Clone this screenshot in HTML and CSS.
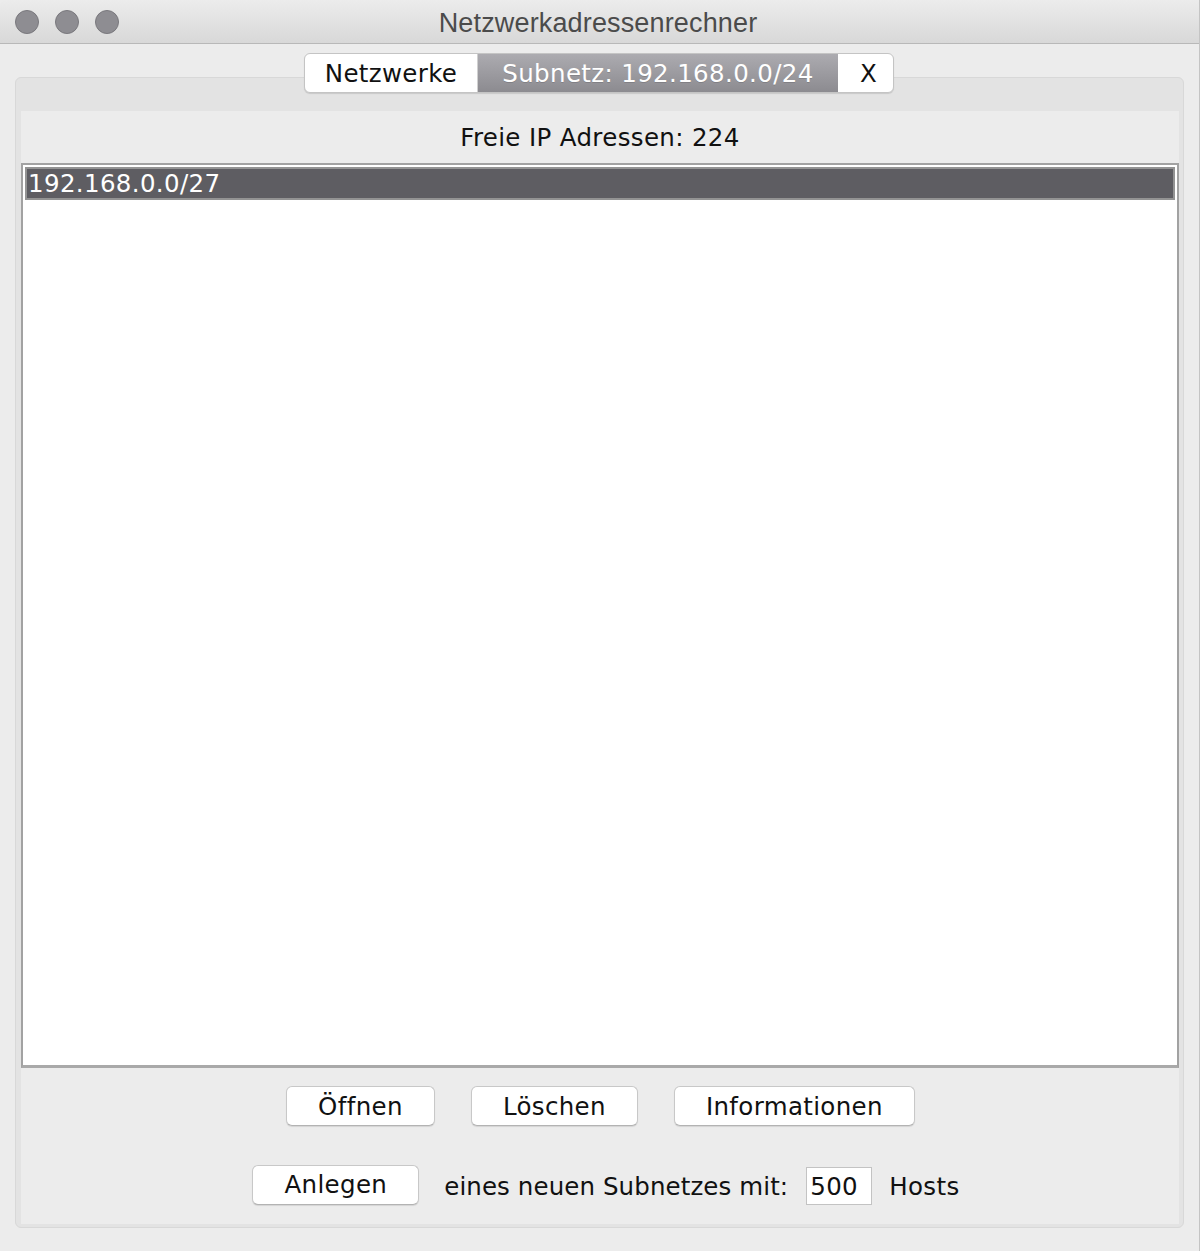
FILE: index.html
```html
<!DOCTYPE html>
<html lang="de">
<head>
<meta charset="utf-8">
<title>Netzwerkadressenrechner</title>
<link rel="stylesheet" href="styles.css">
</head>
<body>
<div class="window">
  <div class="titlebar">
    <div class="lights">
      <span class="light"></span>
      <span class="light"></span>
      <span class="light"></span>
    </div>
    <div class="title">Netzwerkadressenrechner</div>
    <div class="spacer"></div>
  </div>
  <div class="content">
    <div class="tabs">
      <div class="tab">Netzwerke</div>
      <div class="tab tab-selected">Subnetz: 192.168.0.0/24</div>
      <div class="tab tab-close">X</div>
    </div>
    <div class="panel">
      <div class="panel-inner">
        <div class="free-label">Freie IP Adressen: 224</div>
        <div class="list">
          <div class="list-row list-row-selected">192.168.0.0/27</div>
        </div>
        <div class="actions">
          <div class="button-row">
            <button class="btn">Öffnen</button>
            <button class="btn">Löschen</button>
            <button class="btn">Informationen</button>
          </div>
          <div class="create-row">
            <button class="btn">Anlegen</button>
            <span class="create-text">eines neuen Subnetzes mit:</span>
            <div class="hosts-input">500</div>
            <span class="hosts-text">Hosts</span>
          </div>
        </div>
      </div>
    </div>
  </div>
</div>
</body>
</html>
```

FILE: styles.css
```css
html, body {
  margin: 0;
  padding: 0;
}

body {
  width: 1200px;
  height: 1251px;
  background: #ececec;
  font-family: "DejaVu Sans", "Liberation Sans", sans-serif;
  letter-spacing: 0.35px;
  color: #111;
  overflow: hidden;
}

.window {
  width: 1200px;
  height: 1251px;
  box-sizing: border-box;
  border-right: 1px solid #c4c4c4;
  border-top-left-radius: 6px;
  background: #ececec;
  display: flex;
  flex-direction: column;
}

.titlebar {
  height: 43px;
  flex: none;
  border-bottom: 1px solid #b8b8b8;
  background: linear-gradient(#ececec, #d8d8d8);
  border-top-left-radius: 6px;
  display: grid;
  grid-template-columns: 1fr auto 1fr;
  align-items: center;
}

.lights {
  display: flex;
  gap: 16px;
  padding-left: 15px;
}

.light {
  width: 22px;
  height: 22px;
  border-radius: 50%;
  background: #8e8d92;
  border: 1px solid #79787d;
}

.title {
  font-family: "Liberation Sans", Arial, sans-serif;
  font-size: 27px;
  letter-spacing: 0.15px;
  color: #4b4b4b;
  padding-top: 4px;
  padding-right: 3px;
}

.content {
  flex: 1;
  display: flex;
  flex-direction: column;
  padding-top: 9px;
}

.tabs {
  position: relative;
  z-index: 1;
  align-self: flex-start;
  margin-left: 304px;
  margin-bottom: -16px;
  height: 40px;
  box-sizing: border-box;
  display: flex;
  border: 1px solid #c4c4c4;
  border-radius: 6px;
  background: #fff;
  box-shadow: 0 1px 1px rgba(0, 0, 0, 0.12);
  overflow: hidden;
  font-size: 24.5px;
}

.tab {
  display: flex;
  align-items: center;
  justify-content: center;
  height: 100%;
  color: #111;
}

.tab:first-child {
  width: 172px;
  border-right: 1px solid #d0d0d0;
}

.tab-selected {
  width: 360px;
  background: linear-gradient(#acabb0, #8c8b90);
  color: #fff;
  text-shadow: 0 1px 0 rgba(0, 0, 0, 0.15);
}

.tab-close {
  width: 55px;
  padding-left: 6px;
  box-sizing: border-box;
}

.panel {
  margin: 0 15px 23px 15px;
  flex: 1;
  border: 1px solid #d8d8d8;
  border-radius: 6px;
  background: #e3e3e3;
  padding: 33px 4px 3px 5px;
  display: flex;
}

.panel-inner {
  flex: 1;
  background: #ececec;
  display: flex;
  flex-direction: column;
}

.free-label {
  height: 52px;
  display: flex;
  align-items: center;
  justify-content: center;
  font-size: 24.5px;
  flex: none;
}

.list {
  height: 905px;
  box-sizing: border-box;
  border: 2px solid #a2a2a2;
  border-bottom-width: 3px;
  border-bottom-color: #a9a9a9;
  background: #fff;
  padding: 2px;
  flex: none;
}

.list-row {
  height: 33px;
  box-sizing: border-box;
  display: flex;
  align-items: center;
  padding-left: 1px;
  font-size: 24.5px;
}

.list-row-selected {
  border: 2px solid #939393;
  background: #5e5d62;
  color: #fff;
}

.actions {
  flex: 1;
  display: flex;
  flex-direction: column;
  padding-top: 18px;
}

.button-row {
  display: flex;
  justify-content: center;
  gap: 36px;
  padding-left: 1px;
}

.create-row {
  margin-top: 38px;
  display: flex;
  justify-content: center;
  align-items: center;
  padding-left: 12px;
}

.btn {
  height: 40px;
  box-sizing: border-box;
  padding: 0 31px;
  background: #fff;
  border: 1px solid #c8c8c8;
  border-bottom-color: #b3b3b3;
  border-radius: 6px;
  box-shadow: 0 1px 1px rgba(0, 0, 0, 0.1);
  font-family: "DejaVu Sans", "Liberation Sans", sans-serif;
  font-size: 24.5px;
  letter-spacing: 0.35px;
  color: #111;
  display: flex;
  align-items: center;
}

.create-text {
  margin-left: 25px;
  font-size: 24.5px;
  letter-spacing: 0.1px;
  padding-top: 4px;
}

.hosts-input {
  margin-left: 18px;
  width: 66px;
  height: 38px;
  box-sizing: border-box;
  border: 1px solid #c3c3c3;
  background: #fff;
  font-size: 24.5px;
  padding-left: 3px;
  display: flex;
  align-items: center;
  margin-top: 3px;
}

.hosts-text {
  margin-left: 17px;
  font-size: 24.5px;
  padding-top: 4px;
}
```
